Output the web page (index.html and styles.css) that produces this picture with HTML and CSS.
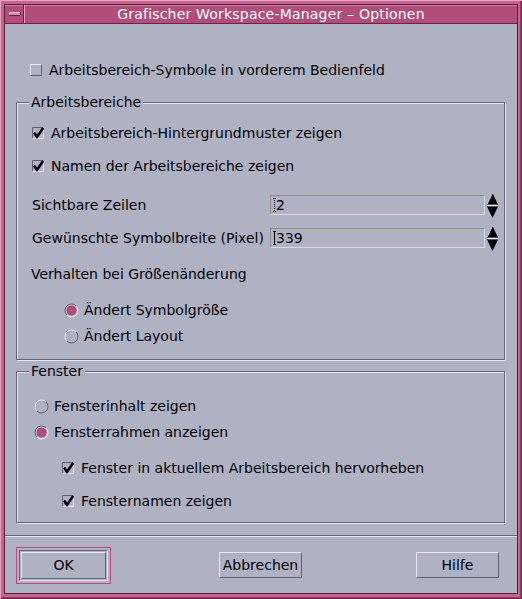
FILE: index.html
```
<!DOCTYPE html>
<html lang="de">
<head>
<meta charset="utf-8">
<title>Grafischer Workspace-Manager – Optionen</title>
<link rel="stylesheet" href="styles.css">
</head>
<body>
<div class="window">
  <div class="inner">
    <div class="titlebar">
      <div class="menubtn"><span class="minus"></span></div>
      <div class="title">Grafischer Workspace-Manager – Optionen</div>
    </div>
    <div class="body">
      <div class="content">
        <div class="row top-check">
          <svg class="box" width="12" height="12" viewBox="0 0 12 12"><path d="M0.5 11.5V0.5H11.5" fill="none" stroke="#e6e8ef"/><path d="M11.5 0.5V11.5H0.5" fill="none" stroke="#5f6272"/></svg>
          <span>Arbeitsbereich-Symbole in vorderem Bedienfeld</span>
        </div>

        <fieldset class="group g1">
          <legend>Arbeitsbereiche</legend>
          <div class="row chk1 ra">
            <svg class="box" width="12" height="12" viewBox="0 0 12 12"><path d="M0.5 11.5V0.5H11.5" fill="none" stroke="#5f6272"/><path d="M11.5 0.5V11.5H0.5" fill="none" stroke="#e6e8ef"/><path d="M2 5.4L5 9.8L11.2 1" fill="none" stroke="#000" stroke-width="2.6"/></svg>
            <span>Arbeitsbereich-Hintergrundmuster zeigen</span>
          </div>
          <div class="row chk1 rb">
            <svg class="box" width="12" height="12" viewBox="0 0 12 12"><path d="M0.5 11.5V0.5H11.5" fill="none" stroke="#5f6272"/><path d="M11.5 0.5V11.5H0.5" fill="none" stroke="#e6e8ef"/><path d="M2 5.4L5 9.8L11.2 1" fill="none" stroke="#000" stroke-width="2.6"/></svg>
            <span>Namen der Arbeitsbereiche zeigen</span>
          </div>
          <div class="row field-row rc">
            <span class="label">Sichtbare Zeilen</span>
            <div class="field">
              <svg class="caret" width="3" height="14" viewBox="0 0 3 14"><path d="M0 0.5H3M1.5 0V14M0 13.5H3" stroke="#000" stroke-dasharray="1 1"/></svg>
              <span>2</span>
            </div>
            <svg class="spin" width="11" height="25" viewBox="0 0 11 25"><path d="M5.5 0L11 11.5H0Z" fill="#000"/><path d="M5.5 0L0 11.5" stroke="#d8dae3" stroke-width="0.8"/><line x1="0" y1="12.5" x2="11" y2="12.5" stroke="#e6e8ef"/><path d="M0 13.5H11L5.5 25Z" fill="#000"/></svg>
          </div>
          <div class="row field-row rd">
            <span class="label">Gewünschte Symbolbreite (Pixel)</span>
            <div class="field">
              <svg class="caret" width="3" height="14" viewBox="0 0 3 14"><path d="M0 0.5H3M1.5 0V14M0 13.5H3" stroke="#000"/></svg>
              <span>339</span>
            </div>
            <svg class="spin" width="11" height="25" viewBox="0 0 11 25"><path d="M5.5 0L11 11.5H0Z" fill="#000"/><path d="M5.5 0L0 11.5" stroke="#d8dae3" stroke-width="0.8"/><line x1="0" y1="12.5" x2="11" y2="12.5" stroke="#e6e8ef"/><path d="M0 13.5H11L5.5 25Z" fill="#000"/></svg>
          </div>
          <div class="row re heading">Verhalten bei Größenänderung</div>
          <div class="row radio1 rf">
            <svg class="radio" width="15" height="15" viewBox="0 0 15 15"><circle cx="7.5" cy="7.5" r="5.6" fill="#b24d7a"/><circle cx="7.5" cy="7.5" r="5.6" fill="none" stroke="#d9dbe4" stroke-width="0.8"/><path d="M2.9 12.1A6.5 6.5 0 0 1 12.1 2.9" fill="none" stroke="#5f6272"/><path d="M12.1 2.9A6.5 6.5 0 0 1 2.9 12.1" fill="none" stroke="#e6e8ef"/></svg>
            <span>Ändert Symbolgröße</span>
          </div>
          <div class="row radio1 rg">
            <svg class="radio" width="15" height="15" viewBox="0 0 15 15"><path d="M2.9 12.1A6.5 6.5 0 0 1 12.1 2.9" fill="none" stroke="#e6e8ef"/><path d="M12.1 2.9A6.5 6.5 0 0 1 2.9 12.1" fill="none" stroke="#5f6272"/></svg>
            <span>Ändert Layout</span>
          </div>
        </fieldset>

        <fieldset class="group g2">
          <legend>Fenster</legend>
          <div class="row radio2 rh">
            <svg class="radio" width="15" height="15" viewBox="0 0 15 15"><path d="M2.9 12.1A6.5 6.5 0 0 1 12.1 2.9" fill="none" stroke="#e6e8ef"/><path d="M12.1 2.9A6.5 6.5 0 0 1 2.9 12.1" fill="none" stroke="#5f6272"/></svg>
            <span>Fensterinhalt zeigen</span>
          </div>
          <div class="row radio2 ri">
            <svg class="radio" width="15" height="15" viewBox="0 0 15 15"><circle cx="7.5" cy="7.5" r="5.6" fill="#b24d7a"/><circle cx="7.5" cy="7.5" r="5.6" fill="none" stroke="#d9dbe4" stroke-width="0.8"/><path d="M2.9 12.1A6.5 6.5 0 0 1 12.1 2.9" fill="none" stroke="#5f6272"/><path d="M12.1 2.9A6.5 6.5 0 0 1 2.9 12.1" fill="none" stroke="#e6e8ef"/></svg>
            <span>Fensterrahmen anzeigen</span>
          </div>
          <div class="row chk2 rj">
            <svg class="box" width="12" height="12" viewBox="0 0 12 12"><path d="M0.5 11.5V0.5H11.5" fill="none" stroke="#5f6272"/><path d="M11.5 0.5V11.5H0.5" fill="none" stroke="#e6e8ef"/><path d="M2 5.4L5 9.8L11.2 1" fill="none" stroke="#000" stroke-width="2.6"/></svg>
            <span>Fenster in aktuellem Arbeitsbereich hervorheben</span>
          </div>
          <div class="row chk2 rk">
            <svg class="box" width="12" height="12" viewBox="0 0 12 12"><path d="M0.5 11.5V0.5H11.5" fill="none" stroke="#5f6272"/><path d="M11.5 0.5V11.5H0.5" fill="none" stroke="#e6e8ef"/><path d="M2 5.4L5 9.8L11.2 1" fill="none" stroke="#000" stroke-width="2.6"/></svg>
            <span>Fensternamen zeigen</span>
          </div>
        </fieldset>
      </div>

      <div class="sep"></div>

      <div class="buttons">
        <div class="focus">
          <div class="default">
            <div class="btn btn-ok">OK</div>
          </div>
        </div>
        <div class="btn btn-cancel">Abbrechen</div>
        <div class="btn btn-help">Hilfe</div>
      </div>
    </div>
  </div>
</div>
</body>
</html>
```

FILE: styles.css
```
* {
  box-sizing: border-box;
}

html,
body {
  margin: 0;
  padding: 0;
}

body {
  width: 522px;
  height: 599px;
  font-family: "DejaVu Sans", sans-serif;
  font-size: 14px;
  color: #000;
  background: #aeb2c3;
  overflow: hidden;
}

.window {
  width: 522px;
  height: 599px;
  background: #c2668f;
  padding: 4px 4px 5px 4px;
  box-shadow: inset 1px 1px 0 #e7a3c1, inset -1px -1px 0 #6e2446, inset -2px -2px 0 #9a4068;
  display: flex;
}

.inner {
  flex: 1;
  border: 1px solid #5a1f3b;
  display: flex;
  flex-direction: column;
}

.titlebar {
  height: 19px;
  display: flex;
  background: #b24d7a;
  border-bottom: 1px solid #6a2546;
  box-shadow: inset 0 1px 0 #cf7ba1;
}

.menubtn {
  width: 19px;
  display: flex;
  align-items: flex-start;
  padding: 7px 0 0 4px;
  box-shadow: inset -1px 0 0 #6a2546, 1px 0 0 #e5a3c0;
}

.minus {
  width: 11px;
  height: 3px;
  background: #d48aab;
  border-top: 1px solid #f0c0d6;
  border-left: 1px solid #f0c0d6;
  box-shadow: 0 1px 0 #6a2546, 1px 0 0 #6a2546;
}

.title {
  flex: 1;
  text-align: center;
  color: #fff;
  line-height: 19px;
  padding-left: 1px;
  letter-spacing: 0.2px;
  white-space: nowrap;
}

.body {
  flex: 1;
  background: #aeb2c3;
  display: flex;
  flex-direction: column;
}

.content {
  padding: 36px 12px 0 11px;
}

.row {
  display: flex;
  align-items: center;
  height: 20px;
  white-space: nowrap;
}

.box {
  flex: none;
  margin-right: 7px;
}

.radio {
  flex: none;
  margin-right: 5px;
}

.top-check {
  padding-left: 14px;
}

.group {
  margin: 0;
  padding: 0;
  min-width: 0;
  border: 1px solid #64677a;
  box-shadow: inset 1px 1px 0 #e4e6ee, 1px 1px 0 #e4e6ee;
}

.group legend {
  margin-left: 12px;
  padding: 0 2px;
  line-height: 16px;
  background: #aeb2c3;
}

.g1 {
  margin-top: 14px;
  padding-bottom: 13px;
}

.g2 {
  margin-top: 3px;
  padding-bottom: 11px;
}

.chk1 {
  padding-left: 15px;
}

.field-row {
  padding-left: 15px;
}

.label {
  width: 238px;
  flex: none;
}

.field {
  width: 215px;
  height: 20px;
  flex: none;
  display: flex;
  align-items: center;
  padding-left: 2px;
  border: 1px solid;
  border-color: #8e8b86 #d9dae2 #d9dae2 #8e8b86;
}

.caret {
  flex: none;
}

.spin {
  flex: none;
  margin-left: 2px;
}

.heading {
  padding-left: 14px;
}

.radio1 {
  padding-left: 47px;
}

.radio2 {
  padding-left: 17px;
}

.chk2 {
  padding-left: 45px;
}

.ra { margin-top: 13px; }
.rb { margin-top: 13px; }
.rc { margin-top: 19px; }
.rd { margin-top: 13px; }
.re { margin-top: 16px; }
.rf { margin-top: 16px; }
.rg { margin-top: 6px; }
.rh { margin-top: 17px; }
.ri { margin-top: 6px; }
.rj { margin-top: 16px; }
.rk { margin-top: 13px; }

.sep {
  margin-top: 12px;
  height: 2px;
  border-top: 1px solid #64677a;
  border-bottom: 1px solid #e4e6ee;
}

.buttons {
  flex: 1;
  display: flex;
  align-items: center;
  padding-left: 11px;
}

.focus {
  border: 1px solid #c4467e;
  padding: 2px;
}

.default {
  border: 1px solid;
  border-color: #64677a #e4e6ee #e4e6ee #64677a;
  padding: 1px;
}

.btn {
  display: flex;
  align-items: center;
  justify-content: center;
  width: 83px;
  height: 26px;
  border: 1px solid;
  border-color: #e6e8ef #5f6272 #5f6272 #e6e8ef;
  background: #aeb2c3;
  white-space: nowrap;
}

.btn-ok {
  width: 85px;
  height: 27px;
}

.btn-cancel {
  margin-left: 108px;
}

.btn-help {
  margin-left: 114px;
}
```
